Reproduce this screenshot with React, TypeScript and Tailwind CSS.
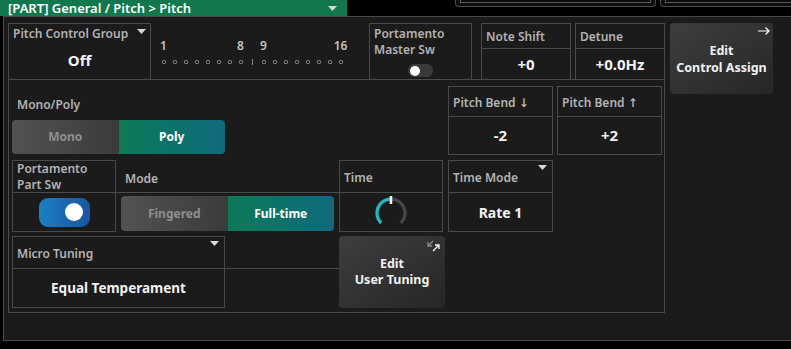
import React from "react";

const label = "text-[12px] font-semibold leading-[16px] text-[#b3b3b3] whitespace-nowrap";
const value = "text-[14px] font-bold text-[#f2f2f2] whitespace-nowrap";
const bigValue = "text-[15px] font-bold text-[#f2f2f2] whitespace-nowrap";

function Caret({ className }: { className: string }) {
  return (
    <svg width="9" height="5" viewBox="0 0 9 5" className={className}>
      <path d="M0 0h9L4.5 5z" fill="#d8d8d8" />
    </svg>
  );
}

function ParamBox({
  title,
  val,
  valClass = value,
  w,
  headH,
  caret,
  children,
}: {
  title: React.ReactNode;
  val?: string;
  valClass?: string;
  w: string;
  headH: string;
  caret?: boolean;
  children?: React.ReactNode;
}) {
  return (
    <div className={`${w} flex flex-col border border-[#4a4a4a]`}>
      <div className={`${headH} relative flex items-center pl-[4px] pt-[2px] border-b border-[#4a4a4a]`}>
        <span className={label}>{title}</span>
        {caret && <Caret className="absolute right-[5px] top-[4px]" />}
      </div>
      <div className="flex-1 flex items-center justify-center">
        {val ? <span className={valClass}>{val}</span> : children}
      </div>
    </div>
  );
}

function Segmented({ a, b }: { a: string; b: string }) {
  return (
    <div className="flex h-full w-full rounded-[4px] overflow-hidden text-[12px] font-bold">
      <div className="flex-1 flex items-center justify-center bg-linear-to-r from-[#525252] to-[#3b3b3b] text-[#8e8e8e]">
        {a}
      </div>
      <div className="flex-1 flex items-center justify-center bg-linear-to-r from-[#0d7a56] to-[#11697c] text-white">
        {b}
      </div>
    </div>
  );
}

function Knob() {
  return (
    <svg width="36" height="36" viewBox="0 0 36 36" className="mt-[2px]">
      <path d="M8.1 27.9A14 14 0 0 1 18 4" fill="none" stroke="#27b3c4" strokeWidth="3.5" />
      <path d="M18 4A14 14 0 0 1 27.9 27.9" fill="none" stroke="#474747" strokeWidth="3.5" />
      <line x1="18" y1="1" x2="18" y2="9" stroke="#fff" strokeWidth="2.5" />
    </svg>
  );
}

function Strip() {
  const cols = Array.from({ length: 16 }, (_, i) => i + 1);
  const shown = [1, 8, 9, 16];
  return (
    <div className="w-[218px] flex pl-[7px] pt-[15px]">
      {cols.map((n) => (
        <React.Fragment key={n}>
          <div className="w-[11px] flex flex-col items-center">
            <span className="text-[12px] font-semibold leading-[16px] text-[#c4c4c4] h-[16px]">
              {shown.includes(n) ? n : ""}
            </span>
            <div className="mt-[6px] w-[4px] h-[4px] border border-[#777] rounded-[1px]" />
          </div>
          {n === 8 && (
            <div className="w-[12px] flex flex-col items-center">
              <div className="h-[16px]" />
              <div className="mt-[5px] w-[1px] h-[6px] bg-[#8a8a8a]" />
            </div>
          )}
        </React.Fragment>
      ))}
    </div>
  );
}

function Toggle({ on }: { on: boolean }) {
  if (on)
    return (
      <div className="w-[51px] h-[29px] rounded-[9px] bg-linear-to-r from-[#1b7fc4] to-[#1a55a0] flex items-center justify-end pr-[7px]">
        <div className="w-[18px] h-[18px] rounded-full bg-white" />
      </div>
    );
  return (
    <div className="w-[25px] h-[13px] rounded-[6px] bg-[#3a3a3a] flex items-center pl-[2px]">
      <div className="w-[10px] h-[10px] rounded-full bg-white" />
    </div>
  );
}

export default function App() {
  return (
    <div className="w-[791px] h-[349px] bg-black overflow-hidden font-['Noto_Sans','DejaVu_Sans',sans-serif]">
      {/* top strip */}
      <div className="flex h-[16px]">
        <div className="w-[347px] bg-[#13774d] flex items-center justify-between pl-[8px] pr-[10px]">
          <span className="text-[13px] font-semibold text-white leading-[14px]">
            [PART] General / Pitch &gt; Pitch
          </span>
          <Caret className="" />
        </div>
        <div className="ml-[108px] w-[201px] h-[7px] border border-t-0 border-[#4d4d4d] rounded-b-[4px] bg-[#0d0d0d] px-[4px]">
          <div className="h-[3px] border-b border-x border-[#5a5a5a]" />
        </div>
        <div className="ml-[4px] flex-1 h-[7px] border border-t-0 border-r-0 border-[#4d4d4d] rounded-bl-[4px] bg-[#0d0d0d] pl-[4px]">
          <div className="h-[3px] border-b border-l border-[#5a5a5a]" />
        </div>
      </div>

      {/* main panel */}
      <div className="ml-[3px] w-[800px] h-[325px] border border-[#4a4a4a] bg-[#1b1b1b] pl-[4px] pt-[6px] flex items-start">
        <div className="w-[657px] flex flex-col">
          {/* top row */}
          <div className="flex h-[56px]">
            <div className="w-[143px] flex flex-col border border-b-0 border-[#4a4a4a] relative">
              <div className="flex pl-[4px] pt-[2px]">
                <span className={label}>Pitch Control Group</span>
              </div>
              <Caret className="absolute right-[4px] top-[5px]" />
              <div className="flex-1 flex items-center justify-center pb-[1px]">
                <span className={bigValue}>Off</span>
              </div>
            </div>
            <Strip />
            <div className="w-[103px] flex flex-col items-start border border-b-0 border-[#4a4a4a] pl-[4px] pt-[2px]">
              <span className={label}>Portamento</span>
              <span className={label}>Master Sw</span>
              <div className="mt-[6px] ml-[34px]">
                <Toggle on={false} />
              </div>
            </div>
            <div className="ml-[9px] w-[90px] flex flex-col border border-b-0 border-[#4a4a4a]">
              <div className="h-[25px] flex items-center pl-[4px] pt-[2px] border-b border-[#4a4a4a]">
                <span className={label}>Note Shift</span>
              </div>
              <div className="flex-1 flex items-center justify-center">
                <span className={bigValue}>+0</span>
              </div>
            </div>
            <div className="ml-[4px] w-[90px] flex flex-col border border-b-0 border-[#4a4a4a]">
              <div className="h-[25px] flex items-center pl-[4px] pt-[2px] border-b border-[#4a4a4a]">
                <span className={label}>Detune</span>
              </div>
              <div className="flex-1 flex items-center justify-center">
                <span className={bigValue}>+0.0Hz</span>
              </div>
            </div>
          </div>

          {/* inner frame */}
          <div className="h-[234px] border border-[#4a4a4a] pl-[3px] pt-[6px] flex flex-col">
            {/* row 1 */}
            <div className="flex h-[69px]">
              <div className="w-[213px] flex flex-col">
                <div className="h-[34px] flex pl-[5px] pt-[11px]">
                  <span className={label}>Mono/Poly</span>
                </div>
                <div className="h-[34px]">
                  <Segmented a="Mono" b="Poly" />
                </div>
              </div>
              <ParamBox title="Pitch Bend ↓" val="-2" valClass={bigValue} w="w-[105px] ml-[223px]" headH="h-[30px]" />
              <ParamBox title="Pitch Bend ↑" val="+2" valClass={bigValue} w="w-[105px] ml-[4px]" headH="h-[30px]" />
            </div>

            {/* row 2 */}
            <div className="flex h-[72px] mt-[5px]">
              <div className="w-[104px] flex flex-col border border-[#4a4a4a]">
                <div className="h-[32px] flex flex-col pl-[4px] border-b border-[#4a4a4a]">
                  <span className={label}>Portamento</span>
                  <span className={label}>Part Sw</span>
                </div>
                <div className="flex-1 flex items-center justify-center">
                  <Toggle on />
                </div>
              </div>
              <div className="w-[223px] flex flex-col pt-[1px]">
                <div className="h-[32px] flex items-center pl-[9px] pt-[5px] border-b border-[#4a4a4a]">
                  <span className={label}>Mode</span>
                </div>
                <div className="px-[5px] pt-[3px] h-[38px]">
                  <Segmented a="Fingered" b="Full-time" />
                </div>
              </div>
              <ParamBox title="Time" w="w-[104px]" headH="h-[32px]">
                <Knob />
              </ParamBox>
              <ParamBox title="Time Mode" val="Rate 1" w="w-[105px] ml-[5px]" headH="h-[32px]" caret />
            </div>

            {/* row 3 */}
            <div className="flex h-[72px] mt-[4px]">
              <ParamBox
                title="Micro Tuning"
                val="Equal Temperament"
                valClass="text-[13.5px] font-bold text-[#f2f2f2] whitespace-nowrap"
                w="w-[213px]"
                headH="h-[32px]"
                caret
              />
              <div className="w-[114px] h-[33px] border-b border-[#4a4a4a]" />
              <div className="w-[106px] h-[72px] rounded-[4px] bg-linear-to-br from-[#3e3e3e] to-[#262626] relative flex flex-col items-center justify-center text-[12.5px] font-bold leading-[16px] text-[#f2f2f2]">
                <svg width="13" height="12" viewBox="0 0 13 12" className="absolute right-[5px] top-[4px]">
                  <path d="M6 1L1 6M1 2v4h4" fill="none" stroke="#8c8c8c" strokeWidth="1.3" />
                  <path d="M6 11l6-6M8 5h4v4" fill="none" stroke="#ffffff" strokeWidth="1.3" />
                </svg>
                <span>Edit</span>
                <span>User Tuning</span>
              </div>
            </div>
          </div>
        </div>

        {/* Edit Control Assign */}
        <div className="ml-[5px] w-[103px] h-[71px] rounded-[4px] bg-linear-to-br from-[#3e3e3e] to-[#262626] relative flex flex-col items-center justify-center text-[12.5px] font-bold leading-[17px] text-[#f2f2f2]">
          <svg width="12" height="8" viewBox="0 0 12 8" className="absolute right-[3px] top-[4px]">
            <path d="M0 4h11M7.5 0.5L11 4 7.5 7.5" fill="none" stroke="#ffffff" strokeWidth="1.2" />
          </svg>
          <span>Edit</span>
          <span>Control Assign</span>
        </div>
      </div>
    </div>
  );
}
